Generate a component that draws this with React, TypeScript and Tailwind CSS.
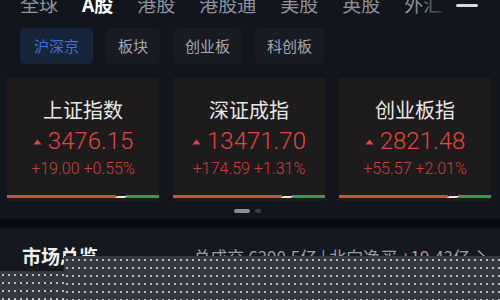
import React from 'react'

interface IndexCard {
  name: string
  value: string
  change: string
  pct: string
}

const tabs = ['全球', 'A股', '港股', '港股通', '美股', '英股', '外汇']
const chips = ['沪深京', '板块', '创业板', '科创板']

const cards: IndexCard[] = [
  { name: '上证指数', value: '3476.15', change: '+19.00', pct: '+0.55%' },
  { name: '深证成指', value: '13471.70', change: '+174.59', pct: '+1.31%' },
  { name: '创业板指', value: '2821.48', change: '+55.57', pct: '+2.01%' },
]

function Card({ card }: { card: IndexCard }) {
  return (
    <div className="flex w-[152px] shrink-0 flex-col items-center bg-[#1e1b1c] pt-[19px]">
      <div className="text-[20px] leading-[26px] text-[#e8e8e8]">{card.name}</div>
      <div className="mt-[4px] flex items-center text-[#e0463f]">
        <svg width="9" height="6" viewBox="0 0 9 6" className="mr-[6px] mt-[1px]">
          <path d="M0.5 5.5 L4.5 0.5 L8.5 5.5 Z" fill="#e0463f" />
        </svg>
        <span className="font-['Roboto',sans-serif] text-[24px] font-light leading-[28px]">
          {card.value}
        </span>
      </div>
      <div className="mt-[4px] font-['Roboto',sans-serif] text-[16px] font-light leading-[20px] text-[#c7423c]">
        {card.change} {card.pct}
      </div>
      <div className="mt-[16px] flex h-[3px] w-full items-center">
        <div className="h-full w-[72%] bg-[#c9552c]" />
        <div className="h-[2px] w-[10px] -skew-x-[50deg] bg-[#e8e8e8]" />
        <div className="h-full flex-1 bg-[#2f9e47]" />
      </div>
      <div className="h-[3px]" />
    </div>
  )
}

export default function App() {
  return (
    <div
      className="relative h-[300px] w-[500px] overflow-hidden bg-[#12151c]"
      style={{ fontFamily: '"Noto Sans CJK SC", "Noto Sans", sans-serif' }}
    >
      {/* Top tabs */}
      <div className="relative -mt-[8px] flex h-[30px] items-start pl-[20px] pr-[22px]">
        <div className="flex flex-1 items-start gap-[24px] overflow-hidden text-[19px] leading-[24px] text-[#8d929b]">
          {tabs.map((t) => (
            <div key={t} className="relative shrink-0">
              <span className={t === 'A股' ? 'font-bold text-white' : ''}>{t}</span>
              {t === 'A股' && (
                <div className="absolute left-[10px] top-[25px] h-[3px] w-[14px] rounded-full bg-[#4a86f0]" />
              )}
            </div>
          ))}
        </div>
        <div className="absolute right-[48px] top-0 h-[30px] w-[36px] bg-gradient-to-r from-transparent to-[#12151c]" />
        <div className="ml-[6px] mt-[12px] h-[3px] w-[22px] shrink-0 rounded-sm bg-[#d8dade]" />
      </div>

      {/* Chips */}
      <div className="mt-[6px] flex gap-[13px] pl-[20px]">
        {chips.map((c, i) => (
          <div
            key={c}
            className={
              i === 0
                ? 'flex h-[36px] w-[73px] items-center justify-center rounded-[5px] bg-[#18243a] text-[15px] text-[#3f72d4]'
                : 'flex h-[36px] items-center justify-center rounded-[5px] bg-[#181b22] px-[12px] text-[15px] text-[#a3a7ae]'
            }
          >
            {c}
          </div>
        ))}
      </div>

      {/* Index cards */}
      <div className="mt-[14px] flex gap-[14px] pl-[7px]">
        {cards.map((c) => (
          <Card key={c.name} card={c} />
        ))}
        <div className="w-[152px] shrink-0 bg-[#1e1b1c]" />
      </div>

      {/* Pager */}
      <div className="mt-[8px] flex justify-center gap-[5px] pr-[6px]">
        <div className="h-[4px] w-[16px] rounded-full bg-[#8a8e98]" />
        <div className="h-[4px] w-[6px] rounded-full bg-[#3a3e47]" />
      </div>

      {/* Divider */}
      <div className="mt-[6px] h-[9px] bg-[#0a0b0f]" />

      {/* Market overview */}
      <div className="flex items-center justify-between bg-[#15181f] pl-[22px] pr-[14px] pt-[14px]">
        <div className="text-[19px] font-bold text-[#f0f0f0]">市场总览</div>
        <div className="flex items-center text-[17px] text-[#9a9ea6]">
          总成交 6390.5亿 | 北向净买 +19.43亿
          <svg width="10" height="14" viewBox="0 0 10 14" className="ml-[6px]">
            <path d="M2 1.5 L8 7 L2 12.5" stroke="#9a9ea6" strokeWidth="1.5" fill="none" />
          </svg>
        </div>
      </div>

      {/* Dotted overlay */}
      <div className="absolute bottom-0 left-[64px] right-0 top-[256px] bg-[#34373d] bg-[radial-gradient(circle,#b9bcc2_0.8px,transparent_1px)] bg-[length:6px_8px]" />
      <div className="absolute bottom-0 left-0 top-[271px] w-[64px] bg-[#34373d] bg-[radial-gradient(circle,#b9bcc2_0.8px,transparent_1px)] bg-[length:6px_8px]" />
    </div>
  )
}
